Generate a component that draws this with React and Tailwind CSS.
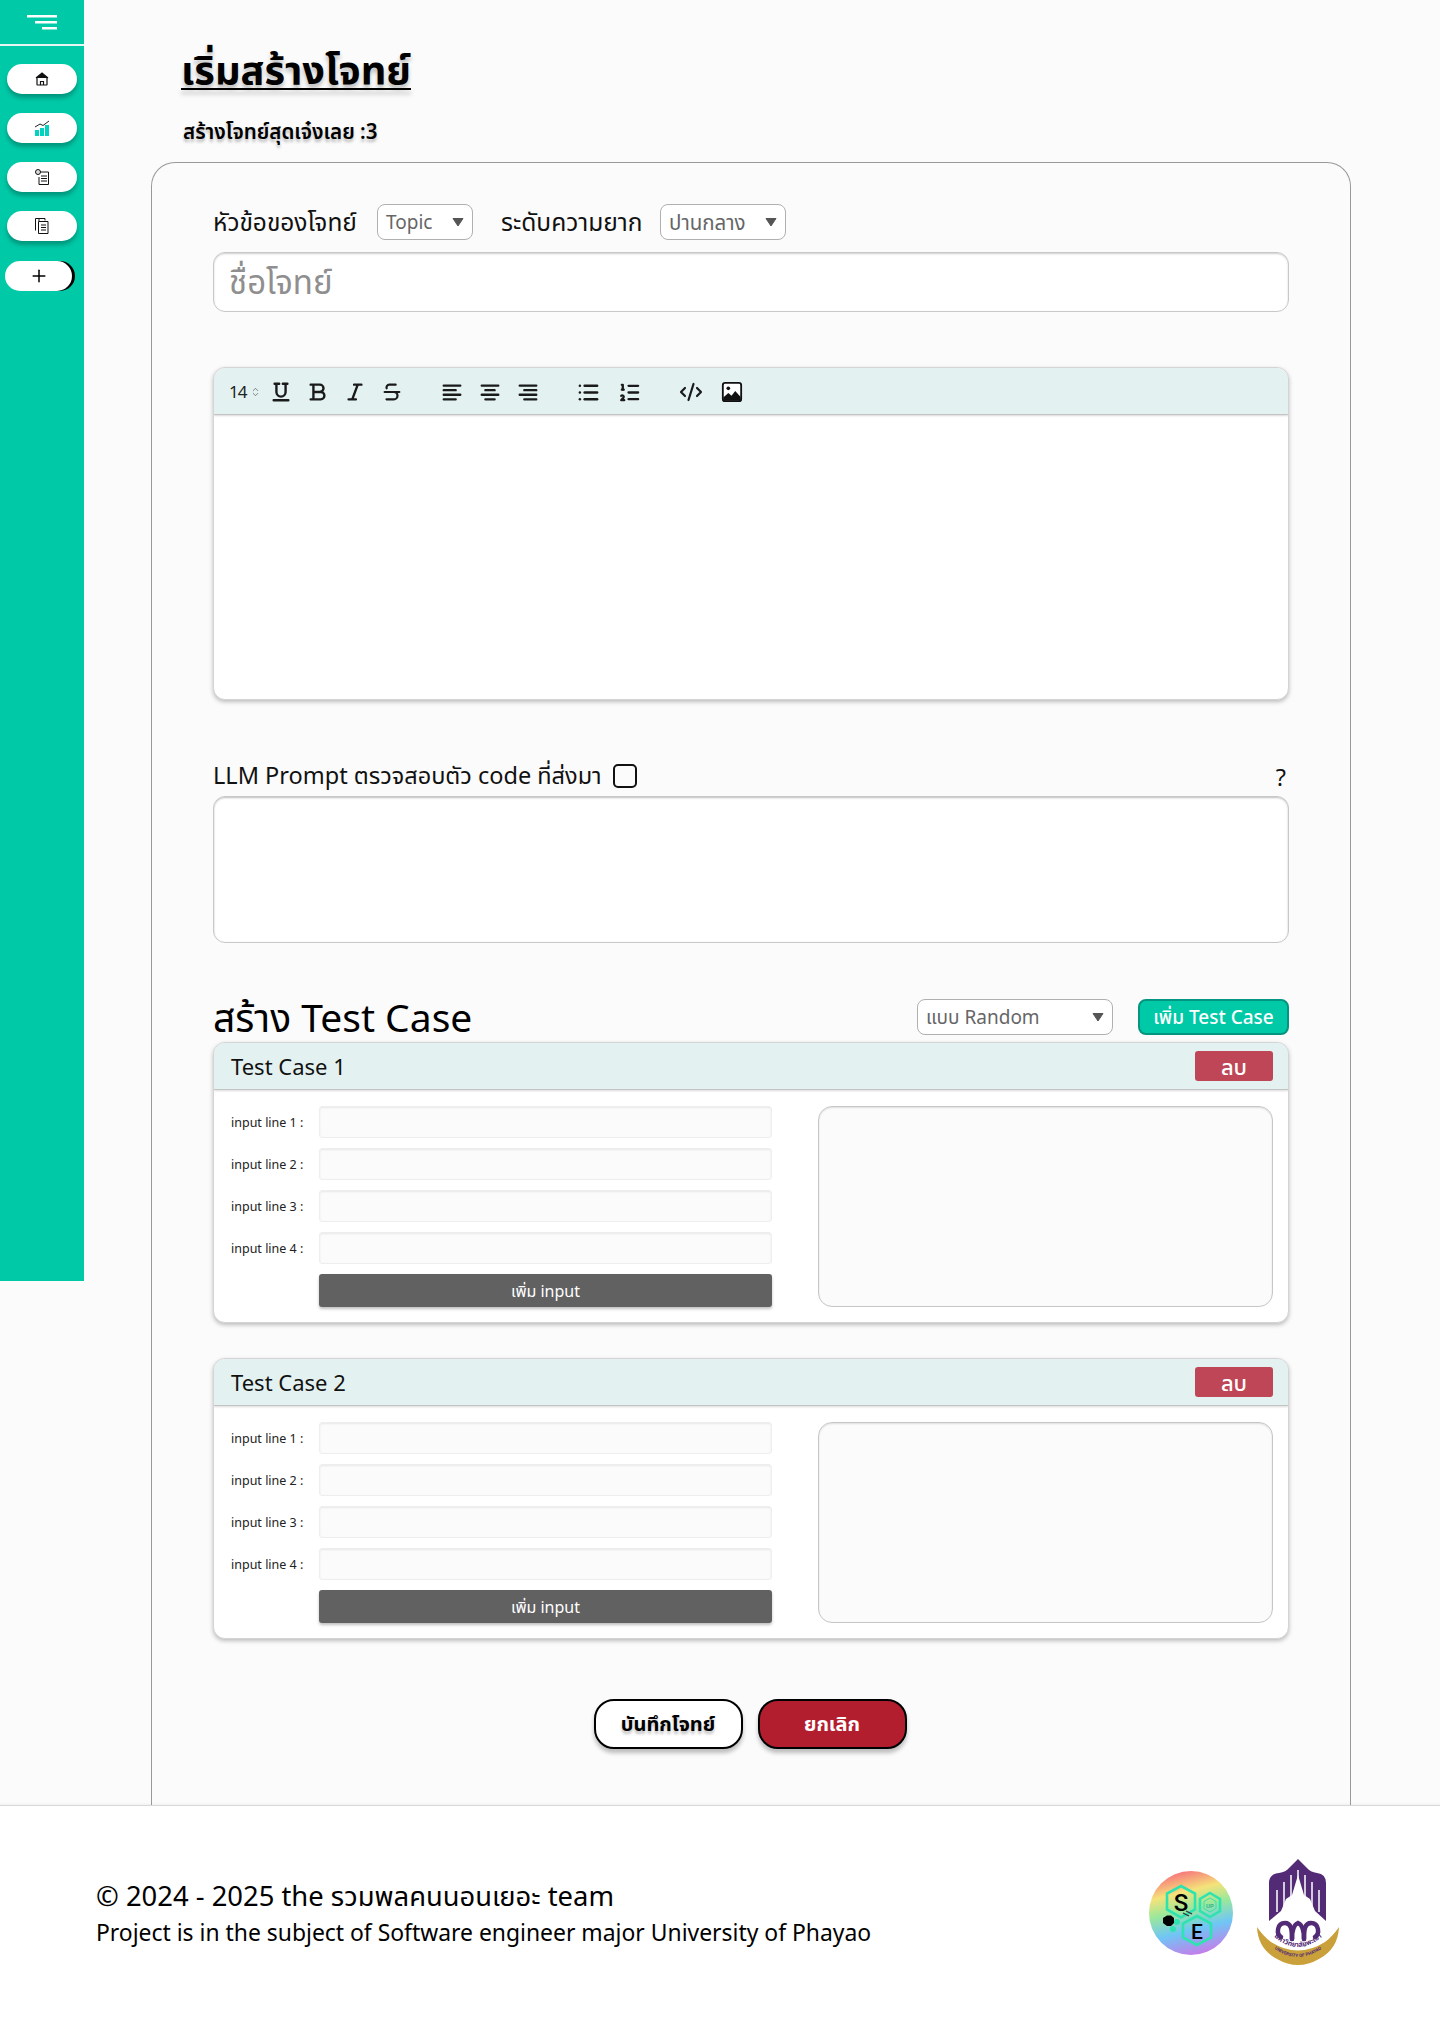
import React from "react";
import { ChevronsUpDown, Strikethrough, List, ListOrdered, CodeXml, Plus } from "lucide-react";

const Caret = ({ className = "" }) => (
  <svg viewBox="0 0 12 10" className={`w-[12px] h-[10px] ${className}`}>
    <path d="M1 1.5h10L6 9z" fill="#555" stroke="#555" strokeLinejoin="round" />
  </svg>
);

const Select = ({ label, className = "", textClass = "text-[19px]" }) => (
  <div
    className={`flex items-center justify-between h-[36px] px-[8px] bg-white border border-[#b0b0b0] rounded-[8px] text-[#666] ${textClass} ${className}`}
  >
    <span>{label}</span>
    <Caret />
  </div>
);

const Stroke = ({ d, width = 2.6, size = 22 }) => (
  <svg
    viewBox="0 0 24 24"
    fill="none"
    stroke="#1a1a1a"
    strokeWidth={width}
    strokeLinecap="round"
    strokeLinejoin="round"
    style={{ width: size, height: size }}
  >
    <path d={d} />
  </svg>
);

const formatIcons = [
  "M5 3h5M14 3h5M7 3v9a5 5 0 0 0 10 0V3M4 21h16",
  "M7 4v16M4 4h10a4 4 0 0 1 0 8H7M7 12h8a4 4 0 0 1 0 8H4",
  "M11 4h8M5 20h8M15 4 9 20",
];

const Toolbar = () => (
  <div className="flex items-center h-[47px] pl-[15px] pt-[2px] bg-[#e3f1f0] rounded-t-[12px] border-b border-[#c4c4c4] shadow-[0_1px_2px_rgba(0,0,0,0.15)]">
    <span className="w-[21px] text-[17px] tracking-[-1px] text-[#222]">14</span>
    <ChevronsUpDown className="w-[11px] h-[14px] text-[#555]" strokeWidth={1.5} />
    <div className="flex items-center gap-[15px] ml-[9px]">
      {formatIcons.map((d) => (
        <Stroke key={d} d={d} />
      ))}
      <Strikethrough className="w-[22px] h-[22px] text-[#1a1a1a]" strokeWidth={2.4} />
    </div>
    <div className="flex items-center gap-[16px] ml-[38px]">
      <Stroke d="M3 5h18M3 10h13M3 15h18M3 20h13" />
      <Stroke d="M3 5h18M7 10h10M3 15h18M7 20h10" />
      <Stroke d="M3 5h18M8 10h13M3 15h18M8 20h13" />
    </div>
    <div className="flex items-center gap-[18px] ml-[38px]">
      <List className="w-[23px] h-[23px] text-[#1a1a1a]" strokeWidth={2.6} />
      <ListOrdered className="w-[23px] h-[23px] text-[#1a1a1a]" strokeWidth={2.4} />
    </div>
    <div className="flex items-center gap-[18px] ml-[38px]">
      <CodeXml className="w-[24px] h-[24px] text-[#1a1a1a]" strokeWidth={2.2} />
      <svg viewBox="0 0 24 24" className="w-[22px] h-[22px]">
        <rect x="2" y="2" width="20" height="20" rx="2.5" fill="#fff" stroke="#111" strokeWidth="2" />
        <circle cx="8" cy="8" r="2" fill="#111" />
        <path d="M2.5 21.500v-3.500l5.500-5 3.500 3 4-5 6 6.500v4z" fill="#111" />
      </svg>
    </div>
  </div>
);

const SidePill = ({ children }) => (
  <div className="flex items-center justify-center w-[70px] h-[30px] bg-white rounded-full shadow-[0_4px_4px_rgba(0,0,0,0.25)]">
    {children}
  </div>
);

const Sidebar = () => (
  <aside className="shrink-0 w-[84px] h-[1281px] bg-[#00c9a7]">
    <div className="flex justify-end h-[46px] pt-[15px] pr-[27px] border-b-2 border-[#e6f7f3]">
      <svg viewBox="0 0 30 15" className="w-[30px] h-[15px]">
        <path d="M0 0h30v2.500H0zM8 6h22v2.500H8zM15 12h15v2.500H15z" fill="#fff" />
      </svg>
    </div>
    <div className="flex flex-col gap-[19px] pt-[18px] pl-[7px]">
      <SidePill>
        <svg viewBox="0 0 14 14" className="w-[14px] h-[14px]" fill="none" stroke="#111" strokeWidth="1.2">
          <path d="M1 6 7 1l6 5" fill="#111" />
          <path d="M2 6v6.500a.5.5 0 0 0 .5.5h9a.5.5 0 0 0 .5-.5V6" />
          <path d="M5.500 13V9.500h3V13" />
        </svg>
      </SidePill>
      <SidePill>
        <svg viewBox="0 0 16 16" className="w-[16px] h-[16px]">
          <path d="M1 10h4v6H1zM6 8h4v8H6zM11 5h4v11h-4z" fill="#00d4c0" />
          <path d="M1 7 6 4l3 1.500L15 1" fill="none" stroke="#222" strokeWidth="1" />
        </svg>
      </SidePill>
      <SidePill>
        <svg viewBox="0 0 14 16" className="w-[14px] h-[16px]" fill="none" stroke="#111" strokeWidth="1">
          <path d="M5 3h8.500v12.500H4V8" />
          <circle cx="3" cy="3" r="2.500" fill="#ddd" />
          <path d="M6 7h6M6 9.500h6M6 12h6" />
        </svg>
      </SidePill>
      <SidePill>
        <svg viewBox="0 0 14 16" className="w-[14px] h-[16px]" fill="none" stroke="#111" strokeWidth="1">
          <path d="M4 3V.5h6v2" />
          <path d="M.5 12.500V.5H10" />
          <path d="M3.500 3.500h9.500v12H3.500z" fill="#fff" />
          <path d="M6 7h5M6 9.500h5M6 12h5" />
        </svg>
      </SidePill>
      <div className="flex items-center justify-center -ml-[2px] mt-[1px] w-[67px] h-[30px] bg-white rounded-full shadow-[3px_0_0_#000]">
        <Plus className="w-[20px] h-[20px] text-black" strokeWidth={1.8} />
      </div>
    </div>
  </aside>
);

const InputRow = ({ label }) => (
  <div className="flex items-center h-[32px]">
    <span className="w-[88px] pt-[3px] text-[12.5px] text-[#222]">{label}</span>
    <div className="w-[453px] h-[32px] bg-[#fbfbfb] border border-[#eeeeee] rounded-[3px] shadow-[inset_0_1px_2px_rgba(0,0,0,0.08)]" />
  </div>
);

const TestCase = ({ title }) => (
  <div className="bg-white rounded-[12px] border border-[#d4d4d4] shadow-[0_2px_4px_rgba(0,0,0,0.25)] overflow-hidden">
    <div className="flex items-center justify-between h-[47px] pl-[17px] pr-[15px] bg-[#e3f1f0] border-b border-[#c4c4c4] shadow-[0_1px_2px_rgba(0,0,0,0.15)]">
      <span className="text-[22px] text-[#111]">{title}</span>
      <button className="w-[78px] h-[30px] bg-[#be4656] rounded-[3px] text-white text-[22px] font-medium leading-none">
        ลบ
      </button>
    </div>
    <div className="flex justify-between pt-[16px] pb-[15px] pl-[17px] pr-[15px]">
      <div className="flex flex-col gap-[10px]">
        <InputRow label="input line 1 :" />
        <InputRow label="input line 2 :" />
        <InputRow label="input line 3 :" />
        <InputRow label="input line 4 :" />
        <button className="ml-[88px] w-[453px] h-[33px] bg-[#616161] rounded-[3px] text-white text-[16px] shadow-[0_2px_3px_rgba(0,0,0,0.25)]">
          เพิ่ม input
        </button>
      </div>
      <div className="w-[455px] h-[201px] bg-[#fbfbfb] border border-[#c6c6c6] rounded-[14px] shadow-[inset_0_1px_2px_rgba(0,0,0,0.12)]" />
    </div>
  </div>
);

const SeLogo = () => (
  <svg viewBox="0 0 84 84" className="w-[84px] h-[84px]">
    <defs>
      <linearGradient id="rainbow" x1="0.35" y1="0" x2="0.6" y2="1">
        <stop offset="0" stopColor="#f7707c" />
        <stop offset="0.25" stopColor="#f5e27a" />
        <stop offset="0.45" stopColor="#9ce89a" />
        <stop offset="0.7" stopColor="#6fc6f5" />
        <stop offset="1" stopColor="#c77bea" />
      </linearGradient>
    </defs>
    <circle cx="42" cy="42" r="42" fill="url(#rainbow)" />
    <g fill="none" stroke="#2fe3b0" strokeWidth="2.6">
      <path d="M32 15 46 22.500v16l-14 8-14-8v-16z" />
      <path d="M61 22 71 28v12l-10 6-10-6V28z" />
      <path d="M48 45 62 52.500v14L48 74l-14-7.500v-14z" />
      <path d="M61 27 67 30.500v7l-6 3.500-6-3.500v-7z" strokeWidth="1" />
    </g>
    <path d="M14 47 18 44.500h4l3 2.500v5l-3 3h-4l-4-3z" fill="#000" />
    <circle cx="28" cy="51" r="3" fill="#2fe3b0" />
    <circle cx="24" cy="58" r="3" fill="#2fe3b0" />
    <path d="M34 42l6 3M37 40l6 3" stroke="#333" strokeWidth="1.200" />
    <text x="32" y="40" textAnchor="middle" fontSize="24" fontWeight="500" fontFamily="Roboto, sans-serif" fill="#000">S</text>
    <text x="48" y="68" textAnchor="middle" fontSize="21" fontWeight="500" fontFamily="Roboto, sans-serif" fill="#000">E</text>
    <text x="61" y="37" textAnchor="middle" fontSize="6" fontWeight="700" fontFamily="Roboto, sans-serif" fill="#2fb88f">UP</text>
  </svg>
);

const UpLogo = () => (
  <svg viewBox="0 0 82 108" className="w-[82px] h-[108px]">
    <defs>
      <path id="upper-arc" d="M11 72 Q41 104 71 72" fill="none" />
      <path id="lower-arc" d="M6 80 Q41 116 76 80" fill="none" />
    </defs>
    <path d="M41 0 50 9Q53 13 60 14 69 15 69 24V62L60 72H22L12 62V24Q12 15 22 14 29 13 32 9z" fill="#532a76" />
    <path d="M41 16 47 36 53 40 58 52 69 62V78H12V62L24 52 29 40 35 36z" fill="#fff" />
    <g stroke="#fff" strokeWidth="1.500">
      <path d="M41 11v28M34 16v24M48 16v24M27 23v24M55 23v24M20 31v22M62 31v22" />
    </g>
    <g fill="none" stroke="#532a76" strokeWidth="4.500" strokeLinecap="round">
      <path d="M24 78c-5-3-4-14 4-14 6 0 7 6 7 16" />
      <path d="M35 80c0-7 1-14 6-16 5 2 6 9 6 16" />
      <path d="M47 80c0-10 1-16 7-16 8 0 9 11 4 14" />
    </g>
    <path d="M0 68Q6 77 14 83 41 100 68 83 76 77 82 68 81 90 62 100 41 112 20 100 1 90 0 68z" fill="#c9a03a" />
    <text fontSize="7" fontWeight="700" fill="#532a76">
      <textPath href="#upper-arc" startOffset="50%" textAnchor="middle">มหาวิทยาลัยพะเยา</textPath>
    </text>
    <text fontSize="4.500" fontWeight="700" fill="#532a76" fontFamily="Roboto, sans-serif">
      <textPath href="#lower-arc" startOffset="50%" textAnchor="middle">UNIVERSITY OF PHAYAO</textPath>
    </text>
  </svg>
);

const Footer = () => (
  <footer className="flex items-center justify-between h-[214px] pl-[96px] pr-[101px] bg-white border-t border-[#d8d8d8] shadow-[0_-1px_2px_rgba(0,0,0,0.05)]">
    <div className="pt-[4px] text-black">
      <p className="text-[27.4px] leading-[36px]">© 2024 - 2025 the รวมพลคนนอนเยอะ team</p>
      <p className="text-[22.9px] leading-[37px]">Project is in the subject of Software engineer major University of Phayao</p>
    </div>
    <div className="flex items-center gap-[24px]">
      <SeLogo />
      <UpLogo />
    </div>
  </footer>
);

export default function App() {
  return (
    <div className="min-h-[2019px] bg-[#fbfbfb] [font-family:'Noto_Sans','Noto_Sans_Thai',sans-serif]">
      <div className="flex h-[1805px] overflow-hidden">
        <Sidebar />

        <main className="flex-1 pl-[67px] pr-[89px]">
          <h1 className="ml-[30px] pt-[42px] h-[118px] text-[39.7px] leading-[54px] font-bold text-black underline underline-offset-4 decoration-2 [text-shadow:0_4px_4px_rgba(0,0,0,0.25)]">
            เริ่มสร้างโจทย์
          </h1>
          <p className="ml-[32px] h-[44px] text-[20.6px] leading-[26px] font-semibold text-black [text-shadow:0_3px_3px_rgba(0,0,0,0.25)]">
            สร้างโจทย์สุดเจ๋งเลย :3
          </p>

          <section className="h-[1700px] border border-b-0 border-[#999] rounded-t-[24px] px-[61px] pt-[41px]">
            {/* heading row */}
            <div className="flex items-center h-[36px] text-[24.5px] text-[#111]">
              <span className="w-[164px]">หัวข้อของโจทย์</span>
              <Select label="Topic" className="w-[96px]" />
              <span className="ml-[28px] w-[159px]">ระดับความยาก</span>
              <Select label="ปานกลาง" className="w-[126px]" textClass="text-[20.5px]" />
            </div>
            <div className="flex items-center h-[60px] mt-[12px] px-[15px] bg-white border border-[#c8c8c8] rounded-[12px] shadow-[inset_0_1px_2px_rgba(0,0,0,0.2)] text-[33px] text-[#8f8f8f]">
              ชื่อโจทย์
            </div>

            {/* editor */}
            <div className="mt-[55px] h-[333px] bg-white rounded-[12px] border border-[#d4d4d4] shadow-[0_2px_4px_rgba(0,0,0,0.25)] overflow-hidden">
              <Toolbar />
            </div>

            {/* prompt */}
            <div className="flex items-center justify-between mt-[56px] h-[36px] pt-[3px] text-[23.5px] text-[#111]">
              <div className="flex items-center gap-[11px]">
                <span>LLM Prompt ตรวจสอบตัว code ที่ส่งมา</span>
                <span className="w-[24px] h-[24px] border-2 border-[#111] rounded-[5px]" />
              </div>
              <span className="pr-[3px] pt-[4px]">?</span>
            </div>
            <div className="mt-[4px] h-[147px] bg-white border border-[#c8c8c8] rounded-[12px] shadow-[inset_0_1px_2px_rgba(0,0,0,0.25)]" />

            {/* test cases */}
            <div className="flex items-center justify-between mt-[56px] h-[36px]">
              <h2 className="text-[39px] leading-[36px] text-black">สร้าง Test Case</h2>
              <div className="flex items-center gap-[25px]">
                <Select label="แบบ Random" className="w-[196px]" />
                <button className="w-[151px] h-[36px] bg-[#00c9a7] border-2 border-[#03957f] rounded-[8px] text-white text-[19px] font-medium">
                  เพิ่ม Test Case
                </button>
              </div>
            </div>
            <div className="flex flex-col gap-[35px] mt-[7px]">
              <TestCase title="Test Case 1" />
              <TestCase title="Test Case 2" />
            </div>

            {/* actions */}
            <div className="flex justify-center gap-[15px] mt-[60px] pr-[2px]">
              <button className="w-[149px] h-[50px] bg-white border-2 border-black rounded-[20px] text-[20px] font-bold text-black shadow-[0_4px_4px_rgba(0,0,0,0.25)] [text-shadow:0_3px_3px_rgba(0,0,0,0.25)]">
                บันทึกโจทย์
              </button>
              <button className="w-[149px] h-[50px] bg-[#b21e2e] border-2 border-black rounded-[20px] text-[20px] font-bold text-white shadow-[0_4px_4px_rgba(0,0,0,0.25)]">
                ยกเลิก
              </button>
            </div>
          </section>
        </main>
      </div>

      <Footer />
    </div>
  );
}
